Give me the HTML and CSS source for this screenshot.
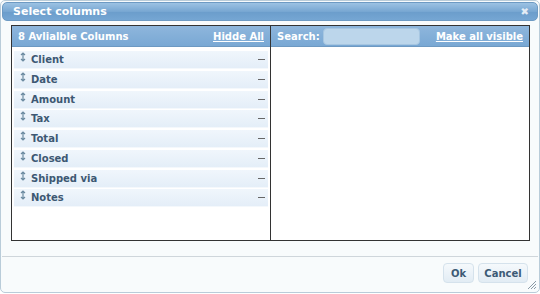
FILE: index.html
```html
<!DOCTYPE html>
<html>
<head>
<meta charset="utf-8">
<link rel="stylesheet" href="styles.css">
</head>
<body>
<div class="dialog">
  <div class="titlebar">
    <span class="title">Select columns</span>
    <span class="close">✖</span>
  </div>
  <div class="content">
    <div class="panel">
      <div class="col left">
        <div class="head">
          <span>8 Avlialble Columns</span>
          <a class="link">Hidde All</a>
        </div>
        <ul class="rows">
          <li><svg class="drag" width="6" height="10" viewBox="0 0 6 10"><path d="M3 1v8M1 3l2-2 2 2M1 7l2 2 2-2" fill="none" stroke="#6b8aa0" stroke-width="1.2"/></svg><span class="name">Client</span><span class="dash"></span></li>
          <li><svg class="drag" width="6" height="10" viewBox="0 0 6 10"><path d="M3 1v8M1 3l2-2 2 2M1 7l2 2 2-2" fill="none" stroke="#6b8aa0" stroke-width="1.2"/></svg><span class="name">Date</span><span class="dash"></span></li>
          <li><svg class="drag" width="6" height="10" viewBox="0 0 6 10"><path d="M3 1v8M1 3l2-2 2 2M1 7l2 2 2-2" fill="none" stroke="#6b8aa0" stroke-width="1.2"/></svg><span class="name">Amount</span><span class="dash"></span></li>
          <li><svg class="drag" width="6" height="10" viewBox="0 0 6 10"><path d="M3 1v8M1 3l2-2 2 2M1 7l2 2 2-2" fill="none" stroke="#6b8aa0" stroke-width="1.2"/></svg><span class="name">Tax</span><span class="dash"></span></li>
          <li><svg class="drag" width="6" height="10" viewBox="0 0 6 10"><path d="M3 1v8M1 3l2-2 2 2M1 7l2 2 2-2" fill="none" stroke="#6b8aa0" stroke-width="1.2"/></svg><span class="name">Total</span><span class="dash"></span></li>
          <li><svg class="drag" width="6" height="10" viewBox="0 0 6 10"><path d="M3 1v8M1 3l2-2 2 2M1 7l2 2 2-2" fill="none" stroke="#6b8aa0" stroke-width="1.2"/></svg><span class="name">Closed</span><span class="dash"></span></li>
          <li><svg class="drag" width="6" height="10" viewBox="0 0 6 10"><path d="M3 1v8M1 3l2-2 2 2M1 7l2 2 2-2" fill="none" stroke="#6b8aa0" stroke-width="1.2"/></svg><span class="name">Shipped via</span><span class="dash"></span></li>
          <li><svg class="drag" width="6" height="10" viewBox="0 0 6 10"><path d="M3 1v8M1 3l2-2 2 2M1 7l2 2 2-2" fill="none" stroke="#6b8aa0" stroke-width="1.2"/></svg><span class="name">Notes</span><span class="dash"></span></li>
        </ul>
      </div>
      <div class="col right">
        <div class="head">
          <span>Search:</span>
          <input class="search" type="text">
          <a class="link">Make all visible</a>
        </div>
      </div>
    </div>
  </div>
  <div class="footer">
    <button class="btn ok">Ok</button>
    <button class="btn cancel">Cancel</button>
    <svg class="grip" width="10" height="10" viewBox="0 0 10 10"><path d="M9 1L1 9M9 4L4 9M9 7L7 9" stroke="#8a9aa6" stroke-width="1"/></svg>
  </div>
</div>
</body>
</html>
```

FILE: styles.css
```css
* { box-sizing: border-box; }
html, body { margin: 0; padding: 0; background: #ffffff; }
body {
  width: 540px;
  height: 294px;
  font-family: "DejaVu Sans", Verdana, sans-serif;
  font-size: 10px;
}
.dialog {
  position: relative;
  width: 540px;
  height: 293px;
  border: 1px solid #b9ccd9;
  border-radius: 5px;
  background: #f8fbfc;
  padding: 1px;
  display: flex;
  flex-direction: column;
}
.titlebar {
  height: 19px;
  border: 1px solid #6d9ac3;
  border-radius: 5px;
  background: linear-gradient(#9cc2e3, #78a7d2 50%, #6b9dcb 51%, #75a6d3);
  display: flex;
  align-items: center;
  justify-content: space-between;
  padding: 0 8px 0 10px;
  color: #fff;
  font-weight: bold;
}
.title { font-size: 11px; }
.close { font-size: 10px; color: #e3ecf5; }
.content {
  padding: 4px 8px 0 9px;
}
.panel {
  height: 216px;
  border: 1px solid #333;
  display: grid;
  grid-template-columns: 259px 1fr;
  background: #fff;
}
.col.left { border-right: 1px solid #333; }
.head {
  height: 21px;
  background: linear-gradient(#8eb6dc, #79a8d4);
  border-bottom: 1px solid #6d99c2;
  display: flex;
  align-items: center;
  color: #fff;
  font-weight: bold;
  padding: 0 6px 0 6px;
}
.left .head { justify-content: space-between; }
.link { text-decoration: underline; color: #fff; }
.search {
  width: 97px;
  height: 17px;
  margin-left: 3px;
  margin-right: auto;
  border: 1px solid #a6c6e1;
  border-radius: 4px;
  background: #bcd6eb;
  padding: 0;
}
.rows {
  list-style: none;
  margin: 0;
  padding: 4px 2px 0 2px;
}
.rows li {
  height: 18px;
  margin-bottom: 1.75px;
  display: flex;
  align-items: center;
  background: linear-gradient(#f0f6fc, #e4eef8);
  border-bottom: 1px solid #f4f8fc;
  padding: 0 3px 0 6px;
  color: #3d5873;
  font-weight: bold;
}
.drag { flex: none; margin-top: -5px; }
.name { margin-left: 5px; }
.dash {
  margin-left: auto;
  width: 7px;
  height: 1px;
  background: #666;
}
.footer {
  margin-top: auto;
  height: 35px;
  border-top: 1px solid #cfd6db;
  display: flex;
  justify-content: flex-end;
  align-items: flex-start;
  gap: 4px;
  padding: 6px 10px 0 0;
  position: relative;
}
.btn {
  height: 20px;
  border: 1px solid #d5e2ec;
  border-radius: 4px;
  background: linear-gradient(#f5f9fc, #e2ecf4);
  color: #3c5a75;
  font-family: "DejaVu Sans", Verdana, sans-serif;
  font-size: 10px;
  font-weight: bold;
  padding: 0;
}
.ok { width: 31px; }
.cancel { width: 50px; }
.grip { position: absolute; right: 1px; bottom: 1px; }
```
